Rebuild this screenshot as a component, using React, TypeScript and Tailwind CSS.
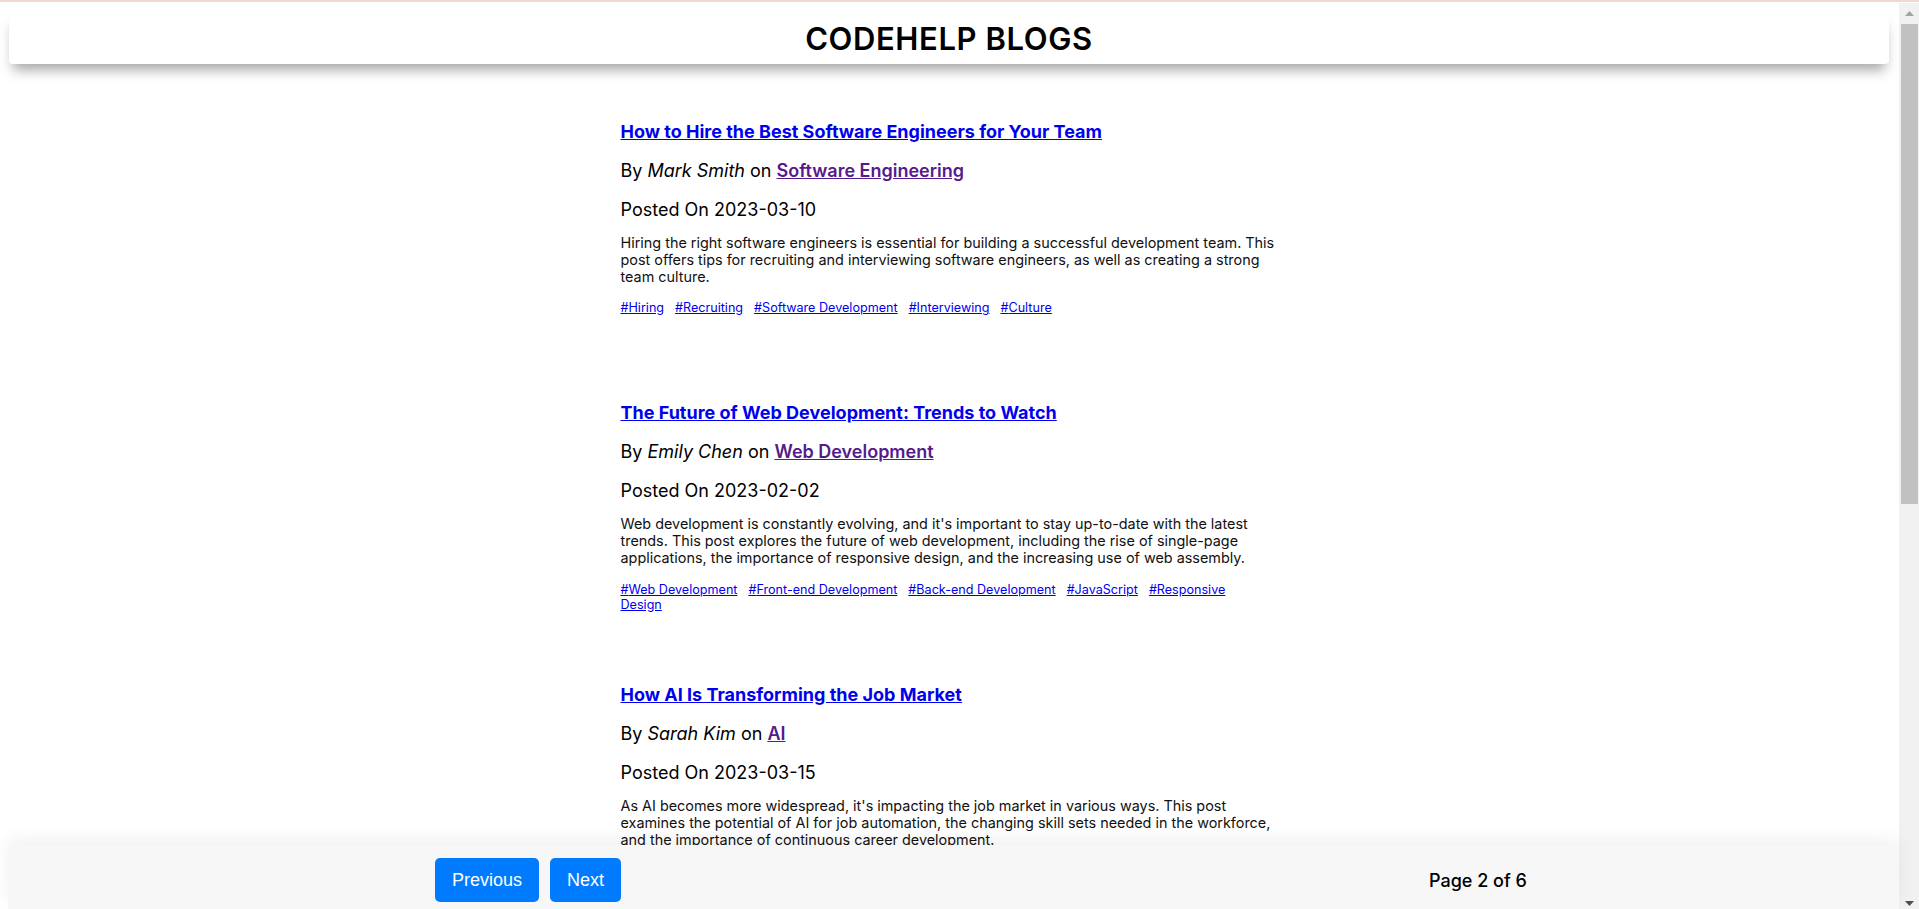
import React from "react";

type Post = {
  title: string;
  author: string;
  category: string;
  date: string;
  content: string;
  tags: string[];
};

const posts: Post[] = [
  {
    title: "How to Hire the Best Software Engineers for Your Team",
    author: "Mark Smith",
    category: "Software Engineering",
    date: "2023-03-10",
    content:
      "Hiring the right software engineers is essential for building a successful development team. This post offers tips for recruiting and interviewing software engineers, as well as creating a strong team culture.",
    tags: ["Hiring", "Recruiting", "Software Development", "Interviewing", "Culture"],
  },
  {
    title: "The Future of Web Development: Trends to Watch",
    author: "Emily Chen",
    category: "Web Development",
    date: "2023-02-02",
    content:
      "Web development is constantly evolving, and it's important to stay up-to-date with the latest trends. This post explores the future of web development, including the rise of single-page applications, the importance of responsive design, and the increasing use of web assembly.",
    tags: ["Web Development", "Front-end Development", "Back-end Development", "JavaScript", "Responsive Design"],
  },
  {
    title: "How AI Is Transforming the Job Market",
    author: "Sarah Kim",
    category: "AI",
    date: "2023-03-15",
    content:
      "As AI becomes more widespread, it's impacting the job market in various ways. This post examines the potential of AI for job automation, the changing skill sets needed in the workforce, and the importance of continuous career development.",
    tags: ["AI", "Job Market", "Automation", "Career Development", "Future of Work"],
  },
];

function BlogCard({ post }: { post: Post }) {
  return (
    <div className="h-[281.5px] shrink-0">
      <a href="#" className="block text-[18px] leading-[normal] font-bold text-[#0000ee] underline">
        {post.title}
      </a>
      <p className="mt-[18px] text-[18px] leading-[normal] text-black">
        By <span className="italic">{post.author}</span> on{" "}
        <a href="#" className="font-semibold text-[#551a8b] underline">
          {post.category}
        </a>
      </p>
      <p className="mt-[18px] text-[18px] leading-[normal] text-black">Posted On {post.date}</p>
      <p className="mt-[14px] text-[14.4px] leading-[normal] text-[#111]">{post.content}</p>
      <div className="mt-[15.5px] text-[12.6px] leading-[15px]">
        {post.tags.map((t) => (
          <a key={t} href="#" className="mr-[11px] text-[#0000ee] underline">
            #{t}
          </a>
        ))}
      </div>
    </div>
  );
}

function Scrollbar() {
  return (
    <div className="flex w-[20px] shrink-0 flex-col bg-[#f1f1f1]">
      <div className="flex h-[20px] items-center justify-center">
        <svg width="9" height="5" viewBox="0 0 9 5">
          <polygon points="0,5 4.5,0 9,5" fill="#a3a3a3" />
        </svg>
      </div>
      <div className="ml-[2px] mt-[1px] h-[480px] w-[17px] bg-[#c1c1c1]" />
      <div className="flex-1" />
      <div className="flex h-[20px] items-center justify-center pt-[8px]">
        <svg width="9" height="5" viewBox="0 0 9 5">
          <polygon points="0,0 9,0 4.5,5" fill="#505050" />
        </svg>
      </div>
    </div>
  );
}

export default function App() {
  return (
    <div className="flex h-screen w-full flex-col overflow-hidden bg-white font-['Inter',sans-serif]">
      <div className="h-[2px] shrink-0 bg-[#f3d8d1]" />
      <div className="h-[1px] shrink-0 bg-white" />
      <div className="flex min-h-0 flex-1">
        <div className="flex min-w-0 flex-1 flex-col">
          <header className="relative z-10 ml-[9px] mr-[10px] mt-[9px] flex h-[52px] shrink-0 items-center justify-center rounded-[4px] bg-white shadow-[0_10px_12px_-4px_rgba(0,0,0,0.35)]">
            <h1 className="text-[31px] leading-[normal] font-semibold tracking-[0.6px] text-black">
              CODEHELP BLOGS
            </h1>
          </header>
          <main className="min-h-0 flex-1 overflow-hidden">
            <div className="mx-auto flex w-[658px] flex-col pt-[56.6px]">
              {posts.map((p) => (
                <BlogCard key={p.title} post={p} />
              ))}
            </div>
          </main>
          <footer className="relative z-10 ml-[8px] flex h-[64px] shrink-0 items-start bg-[#f7f7f7] pl-[427px] pt-[13px] shadow-[0_-6px_18px_rgba(0,0,0,0.06)]">
            <div className="flex h-[44px] items-center">
              <div className="flex gap-[11px] font-['Liberation_Sans',Arial,sans-serif]">
                <button className="h-[44px] w-[104px] rounded-[5px] bg-[#007bff] text-[18px] text-white">
                  Previous
                </button>
                <button className="h-[44px] w-[71px] rounded-[5px] bg-[#007bff] text-[18px] text-white">
                  Next
                </button>
              </div>
              <p className="ml-[808px] text-[18px] leading-[normal] font-medium text-black">Page 2 of 6</p>
            </div>
          </footer>
        </div>
        <Scrollbar />
      </div>
    </div>
  );
}
